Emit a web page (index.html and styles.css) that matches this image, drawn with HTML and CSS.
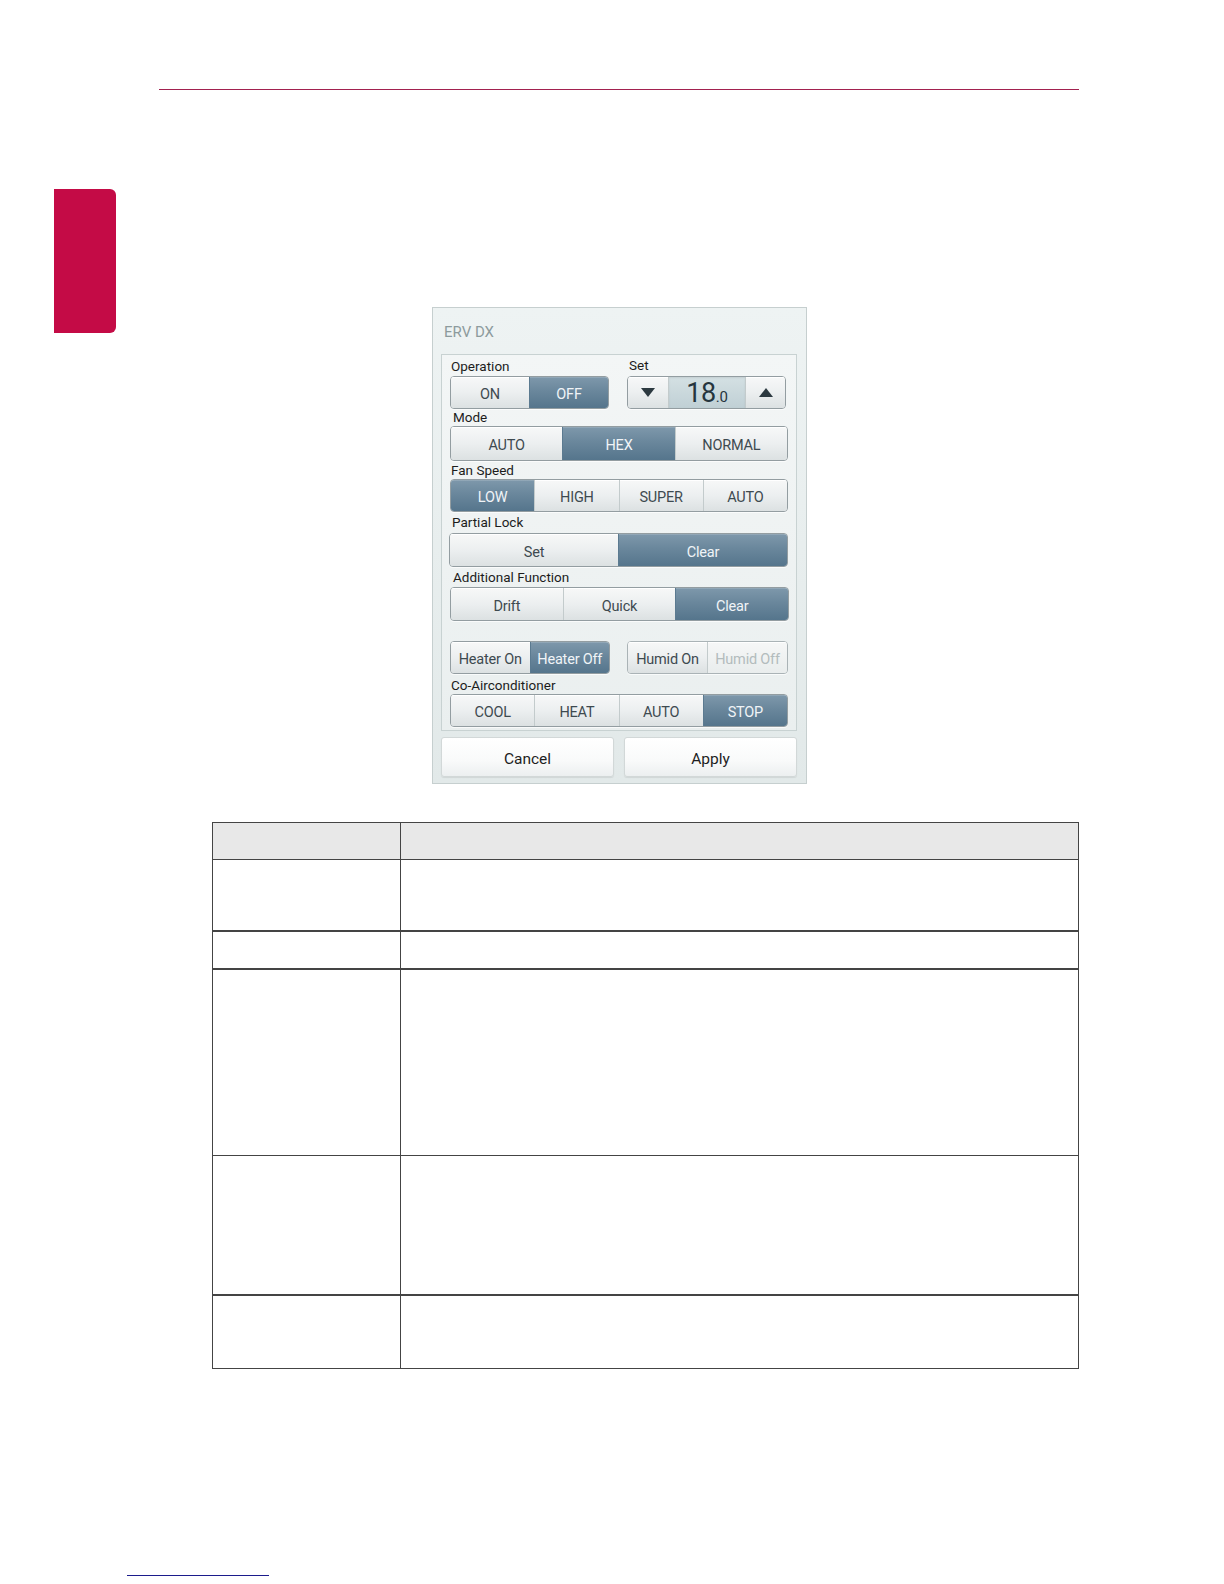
FILE: index.html
```html
<!DOCTYPE html>
<html lang="en">
<head>
<meta charset="utf-8">
<title>ERV DX</title>
<link rel="stylesheet" href="styles.css">
</head>
<body>
<div class="page">
  <div class="rule"></div>
  <div class="layout">
    <aside class="sidebar"><div class="tab"></div></aside>
    <main class="content">
      <div class="dialog">
        <div class="title">ERV DX</div>
        <div class="panel">
          <div class="row2">
            <div class="col">
              <div class="label l-first">Operation</div>
              <div class="group">
                <div class="seg">ON</div>
                <div class="seg sel">OFF</div>
              </div>
            </div>
            <div class="col col-set">
              <div class="label l-first l-set">Set</div>
              <div class="group">
                <div class="seg arrow">
                  <svg width="14" height="9" viewBox="0 0 14 9"><polygon points="0,0 14,0 7,9" fill="#2c3940"/></svg>
                </div>
                <div class="seg value"><span class="num"><span class="big">18</span><span class="small">.0</span></span></div>
                <div class="seg arrow">
                  <svg width="14" height="9" viewBox="0 0 14 9"><polygon points="0,9 14,9 7,0" fill="#2c3940"/></svg>
                </div>
              </div>
            </div>
          </div>

          <div class="label l-mode">Mode</div>
          <div class="group tall">
            <div class="seg">AUTO</div>
            <div class="seg sel">HEX</div>
            <div class="seg">NORMAL</div>
          </div>

          <div class="label l-fan">Fan Speed</div>
          <div class="group">
            <div class="seg sel">LOW</div>
            <div class="seg">HIGH</div>
            <div class="seg">SUPER</div>
            <div class="seg">AUTO</div>
          </div>

          <div class="label l-lock">Partial Lock</div>
          <div class="group mid shift-left">
            <div class="seg">Set</div>
            <div class="seg sel">Clear</div>
          </div>

          <div class="label l-add">Additional Function</div>
          <div class="group mid wide">
            <div class="seg">Drift</div>
            <div class="seg">Quick</div>
            <div class="seg sel">Clear</div>
          </div>

          <div class="row2 toggles">
            <div class="group g-heater">
              <div class="seg">Heater On</div>
              <div class="seg sel">Heater Off</div>
            </div>
            <div class="group g-humid">
              <div class="seg">Humid On</div>
              <div class="seg dis">Humid Off</div>
            </div>
          </div>

          <div class="label l-co">Co-Airconditioner</div>
          <div class="group">
            <div class="seg">COOL</div>
            <div class="seg">HEAT</div>
            <div class="seg">AUTO</div>
            <div class="seg sel">STOP</div>
          </div>
        </div>
        <div class="actions">
          <div class="btn">Cancel</div>
          <div class="btn">Apply</div>
        </div>
      </div>

      <div class="tbl">
        <div class="cell head"></div><div class="cell head"></div>
        <div class="cell thick"></div><div class="cell thick"></div>
        <div class="cell thick"></div><div class="cell thick"></div>
        <div class="cell"></div><div class="cell"></div>
        <div class="cell thick"></div><div class="cell thick"></div>
        <div class="cell"></div><div class="cell"></div>
      </div>
    </main>
  </div>
  <div class="footer-rule"></div>
</div>
</body>
</html>
```

FILE: styles.css
```css
html, body {
  margin: 0;
  padding: 0;
  background: #ffffff;
}
body {
  width: 1224px;
  height: 1584px;
  overflow: hidden;
  font-family: Roboto, "Liberation Sans", sans-serif;
}
.page {
  padding-top: 89px;
}
.rule {
  margin-left: 159px;
  width: 920px;
  height: 1px;
  background: #a2214f;
}
.layout {
  display: flex;
}
.sidebar {
  width: 116px;
  padding-left: 54px;
  box-sizing: border-box;
  flex: 0 0 auto;
}
.tab {
  margin-top: 99px;
  width: 62px;
  height: 144px;
  background: #c40b46;
  border-radius: 0 6px 6px 0;
}
.content {
  flex: 1;
}

/* dialog */
.dialog {
  margin-top: 217px;
  margin-left: 316px;
  width: 375px;
  height: 477px;
  box-sizing: border-box;
  border: 1px solid #c6cfcf;
  background: linear-gradient(#eef3f3, #e2e9e9);
  padding: 0 9px 0 8px;
  display: flex;
  flex-direction: column;
}
.title {
  height: 46px;
  line-height: 49px;
  padding-left: 3px;
  font-size: 15px;
  color: #8d9b9d;
}
.panel {
  height: 377px;
  box-sizing: border-box;
  border: 1px solid #c8d2d2;
  background: linear-gradient(#f3f6f6, #eaefef);
  padding: 2px 8px 0 8px;
}
.row2 {
  display: flex;
  justify-content: space-between;
}
.col {
  width: 159px;
}
.col-set {
  margin-right: 2px;
}
.label {
  font-size: 13.5px;
  color: #1c1c1c;
  padding-left: 1px;
  box-sizing: border-box;
  white-space: nowrap;
}
.l-first { height: 19px; line-height: 18px; }
.l-set { padding-left: 2px; line-height: 16px; }
.l-mode { height: 17px; line-height: 17px; padding-left: 3px; }
.l-fan { height: 18px; line-height: 19px; }
.l-lock { height: 21px; line-height: 21px; padding-left: 2px; }
.l-add { height: 20px; line-height: 20px; padding-left: 3px; }
.l-co { height: 20px; line-height: 22px; }

.group {
  display: flex;
  height: 33px;
  box-sizing: border-box;
  border: 1px solid #939da1;
  border-radius: 4px;
  overflow: hidden;
  box-shadow: 0 1px 0 rgba(255,255,255,0.7);
}
.group.tall { height: 35px; }
.group.mid { height: 34px; }
.group.wide { width: 339px; }
.group.shift-left { margin-left: -1px; }
.seg {
  flex: 1;
  display: flex;
  align-items: center;
  justify-content: center;
  box-sizing: border-box;
  padding-top: 4px;
  font-size: 14.5px;
  color: #3e4a50;
  background: linear-gradient(#f7f8f8 0%, #eceff0 50%, #dce1e2 100%);
  box-shadow: inset 0 1px 0 #ffffff;
  letter-spacing: -0.2px;
  white-space: nowrap;
}
.seg + .seg {
  border-left: 1px solid #c3cbcc;
}
.seg.sel {
  color: #f0f4f7;
  background: linear-gradient(#7e98ab 0%, #6a879c 45%, #55758c 100%);
  box-shadow: inset 0 1px 0 rgba(255,255,255,0.15);
  border-left-color: #5b7a90;
}
.seg.dis {
  color: #b3bcbd;
  background: linear-gradient(#f6f7f7, #e9eded);
}
.seg.arrow {
  flex: 0 0 40px;
  padding-top: 0;
}
.seg.value {
  background: linear-gradient(#d4e0e3, #c0d0d5);
  box-shadow: inset 0 1px 2px rgba(0,0,0,0.08);
  color: #26353e;
  padding-top: 6px;
}
.num {
  line-height: 24px;
  white-space: nowrap;
}
.num .big {
  font-size: 27px;
  letter-spacing: -0.5px;
}
.num .small {
  font-size: 15px;
}
.toggles {
  margin-top: 20px;
}
.g-heater { width: 160px; }
.g-humid { width: 161px; border-color: #aab3b6; }

.actions {
  margin-top: 6px;
  display: flex;
  gap: 10px;
}
.btn {
  flex: 1;
  height: 40px;
  box-sizing: border-box;
  padding-top: 4px;
  border: 1px solid #d2d8d8;
  border-radius: 3px;
  background: linear-gradient(#ffffff 0%, #f9fafa 60%, #eceff0 100%);
  box-shadow: 0 1px 1px rgba(0,0,0,0.08);
  display: flex;
  align-items: center;
  justify-content: center;
  font-size: 15.5px;
  color: #1e1e1e;
}

/* table */
.tbl {
  margin-top: 38px;
  margin-left: 96px;
  width: 867px;
  box-sizing: border-box;
  display: grid;
  grid-template-columns: 188px 1fr;
  grid-template-rows: 37px 72px 38px 186px 140px 73px;
  border-top: 1px solid #444444;
  border-left: 1px solid #444444;
}
.cell {
  border-right: 1px solid #444444;
  border-bottom: 1px solid #444444;
}
.cell.head {
  background: #e8e8e8;
}
.cell.thick {
  border-bottom-width: 2px;
}
.footer-rule {
  margin-top: 206px;
  margin-left: 127px;
  width: 142px;
  height: 1px;
  background: #1c1c8c;
}
```
